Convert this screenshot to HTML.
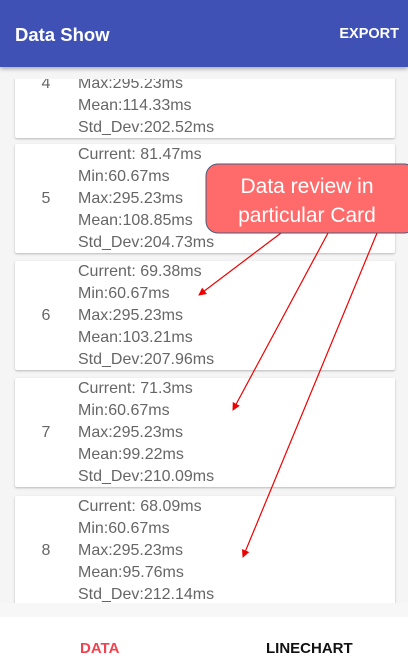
<!DOCTYPE html>
<html><head><meta charset="utf-8"><style>
*{margin:0;padding:0;box-sizing:border-box}
body{width:408px;height:671px;overflow:hidden;background:#f5f5f5;font-family:"Liberation Sans",sans-serif;position:relative}
.hdr{position:absolute;left:0;top:0;width:408px;height:67px;background:#3f51b5;box-shadow:0 2px 4px rgba(0,0,0,.3);z-index:6}
.clipt{position:absolute;left:0;top:60px;width:408px;height:19px;background:#f5f5f5;z-index:5}
.hdr .t{position:absolute;left:15px;top:24px;color:#fff;font-size:18.5px;font-weight:bold}
.hdr .e{position:absolute;right:9px;top:26px;color:#fff;font-size:14.5px;font-weight:bold}
.card{position:absolute;left:15px;width:380px;height:109px;background:#fff;box-shadow:0 1px 2px rgba(0,0,0,.25);border-radius:2px}
.num{position:absolute;left:23px;width:16px;text-align:center;top:44px;font-size:16px;color:#666;line-height:22px}
.lines{position:absolute;left:63px;top:0;font-size:16px;color:#666;line-height:22px}
.nav{position:absolute;left:0;top:603px;width:408px;height:68px;background:#fff;z-index:5;border-top:14px solid #f7f7f7}
.nav .a{position:absolute;left:80px;top:23px;color:#f0434f;font-weight:bold;font-size:15px}
.nav .b{position:absolute;left:266px;top:23px;color:#111;font-weight:bold;font-size:15px}
svg{position:absolute;left:0;top:0;z-index:4}
</style></head><body>
<div class="hdr"><div class="t">Data Show</div><div class="e">EXPORT</div></div>
<div class="clipt"></div>
<div class="card" style="top:29px"><div class="num">4</div><div class="lines">Current: 90.1ms<br>Min:60.67ms<br>Max:295.23ms<br>Mean:114.33ms<br>Std_Dev:202.52ms</div></div>
<div class="card" style="top:144px"><div class="num">5</div><div class="lines">Current: 81.47ms<br>Min:60.67ms<br>Max:295.23ms<br>Mean:108.85ms<br>Std_Dev:204.73ms</div></div>
<div class="card" style="top:261px"><div class="num">6</div><div class="lines">Current: 69.38ms<br>Min:60.67ms<br>Max:295.23ms<br>Mean:103.21ms<br>Std_Dev:207.96ms</div></div>
<div class="card" style="top:378px"><div class="num">7</div><div class="lines">Current: 71.3ms<br>Min:60.67ms<br>Max:295.23ms<br>Mean:99.22ms<br>Std_Dev:210.09ms</div></div>
<div class="card" style="top:496px"><div class="num">8</div><div class="lines">Current: 68.09ms<br>Min:60.67ms<br>Max:295.23ms<br>Mean:95.76ms<br>Std_Dev:212.14ms</div></div>
<svg width="408" height="671">
<defs><marker id="m" markerWidth="8" markerHeight="8" refX="7" refY="4" orient="auto" markerUnits="userSpaceOnUse"><path d="M0,0 L8,4 L0,8 z" fill="#e00"/></marker></defs>
<g stroke="#e00" stroke-width="1.2" fill="none">
<line x1="281" y1="233" x2="199" y2="295" marker-end="url(#m)"/>
<line x1="328" y1="233" x2="233" y2="410" marker-end="url(#m)"/>
<line x1="377" y1="233" x2="243" y2="557" marker-end="url(#m)"/>
</g>
<rect x="206" y="164" width="210" height="69" rx="12" fill="#ff6b6b" stroke="#4a5a7a" stroke-width="1"/>
<text x="307" y="193" text-anchor="middle" fill="#fff" font-size="21" font-family="Liberation Sans,sans-serif">Data review in</text>
<text x="307" y="222" text-anchor="middle" fill="#fff" font-size="21" font-family="Liberation Sans,sans-serif">particular Card</text>
</svg>
<div class="nav"><div class="a">DATA</div><div class="b">LINECHART</div></div>
</body></html>
